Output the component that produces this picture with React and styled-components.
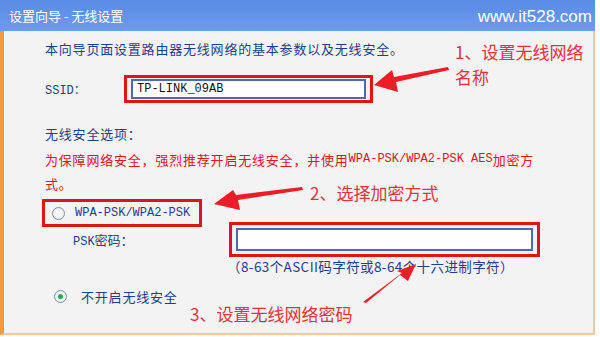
import React from "react";
import styled, { createGlobalStyle } from "styled-components";

const Global = createGlobalStyle`
  html, body { margin: 0; padding: 0; background: #ffffff; }
  body { width: 600px; height: 337px; overflow: hidden; }
`;

const CJK = `"Noto Sans CJK SC", "Noto Sans", sans-serif`;
const MONO = `"Liberation Mono", "Noto Sans CJK SC", monospace`;

const Frame = styled.div`
  position: relative;
  width: 595px;
  height: 335px;
  display: flex;
  flex-direction: column;
  font-family: ${CJK};
`;

const Header = styled.div`
  height: 31px;
  background: linear-gradient(#5a8be2, #6b9cf0);
  display: flex;
  align-items: center;
  justify-content: space-between;
  padding: 0 3px 0 9px;
  color: #fff;
`;

const Title = styled.span`
  font-size: 13px;
`;

const Site = styled.span`
  font-family: "Liberation Sans", Arial, sans-serif;
  font-size: 17px;
  margin-top: 2px;
`;

const Body = styled.div`
  flex: 1;
  background: #f3f3f3;
  border-left: 4px solid #f59a3a;
  border-right: 2px solid #f3c89a;
  border-bottom: 2px solid #f3c89a;
  padding: 8px 0 0 41px;
  display: flex;
  flex-direction: column;
  color: #1f3d8f;
  font-size: 13px;
  letter-spacing: 0.8px;
`;

const Line = styled.div`
  height: ${(p) => p.h || 22}px;
  display: flex;
  align-items: center;
  color: ${(p) => (p.red ? "#e2141c" : "#1f3d8f")};
  margin-top: ${(p) => p.mt || 0}px;
  margin-left: ${(p) => p.ml || 0}px;
  gap: ${(p) => p.gap || 0}px;
  white-space: nowrap;
`;

const Mono = styled.span`
  font-family: ${MONO};
  font-size: 12px;
  letter-spacing: 0;
  width: ${(p) => (p.w ? `${p.w}px` : "auto")};
`;

const Hint = styled(Line)`
  font-size: 13.5px;
  letter-spacing: 0.4px;
`;

const RedBox = styled.div`
  border: 3px solid #e01414;
  width: ${(p) => p.w}px;
  height: ${(p) => p.h}px;
  box-sizing: border-box;
  display: flex;
  align-items: center;
  padding: 0 ${(p) => p.px || 4}px;
  gap: 10px;
`;

const Input = styled.div`
  flex: 1;
  height: ${(p) => p.h || 20}px;
  box-sizing: border-box;
  border: 2px solid #4a69b8;
  background: #fff;
  display: flex;
  align-items: center;
  padding-left: 4px;
  color: #111;
`;

const Radio = styled.span`
  width: 13px;
  height: 13px;
  border-radius: 50%;
  border: 1px solid #7d8fa8;
  background: radial-gradient(circle, #ffffff 0%, #e4e9f0 100%);
  display: inline-flex;
  align-items: center;
  justify-content: center;
  box-sizing: border-box;
  flex: none;
  &::after {
    content: "";
    width: 5px;
    height: 5px;
    border-radius: 50%;
    background: ${(p) => (p.checked ? "#2aa84a" : "transparent")};
  }
`;

const Note = styled.div`
  position: absolute;
  left: ${(p) => p.x}px;
  top: ${(p) => p.y}px;
  color: #e0343c;
  font-size: 17px;
  line-height: 25px;
  white-space: nowrap;
`;

const Arrows = styled.svg`
  position: absolute;
  left: 0;
  top: 0;
  pointer-events: none;
`;

export default function App() {
  return (
    <>
      <Global />
      <Frame>
        <Header>
          <Title>设置向导 - 无线设置</Title>
          <Site>www.it528.com</Site>
        </Header>
        <Body>
          <Line h={18}>本向导页面设置路由器无线网络的基本参数以及无线安全。</Line>
          <Line h={28} mt={18}>
            <Mono w={79}>SSID：</Mono>
            <RedBox w={249} h={28} px={4}>
              <Input h={20}>
                <Mono>TP-LINK_09AB</Mono>
              </Input>
            </RedBox>
          </Line>
          <Line h={20} mt={20}>无线安全选项：</Line>
          <Line red h={24} mt={4}>
            为保障网络安全，强烈推荐开启无线安全，并使用<Mono>WPA-PSK/WPA2-PSK AES</Mono>加密方
          </Line>
          <Line red h={24}>式。</Line>
          <Line h={28} ml={-3} mt={4}>
            <RedBox w={160} h={28} px={7}>
              <Radio />
              <Mono>WPA-PSK/WPA2-PSK</Mono>
            </RedBox>
          </Line>
          <Line h={34} mt={-5} ml={28}>
            <Mono w={156}>PSK<span style={{ fontFamily: CJK, fontSize: 13 }}>密码：</span></Mono>
            <RedBox w={311} h={35} px={4}>
              <Input h={23} />
            </RedBox>
          </Line>
          <Hint h={20} ml={182}>
            （8-63个ASCII码字符或8-64个十六进制字符）
          </Hint>
          <Line h={20} mt={10} ml={9} gap={14}>
            <Radio checked />
            <span>不开启无线安全</span>
          </Line>
        </Body>
        <Note x={455} y={39}>
          1、设置无线网络
          <br />
          名称
        </Note>
        <Note x={310} y={180}>2、选择加密方式</Note>
        <Note x={190} y={301}>3、设置无线网络密码</Note>
        <Arrows width="600" height="337" viewBox="0 0 600 337">
          <g fill="#ee1c24">
            <polygon points="448,67 449,70 396,82 398,92 374,85 392,70 394,77" />
            <polygon points="302,187 303,190 238,200 240,210 214,204 233,190 236,195" />
            <polygon points="363,302 366,303 400,275 408,281 416,264 397,271 402,273" />
          </g>
        </Arrows>
      </Frame>
    </>
  );
}
